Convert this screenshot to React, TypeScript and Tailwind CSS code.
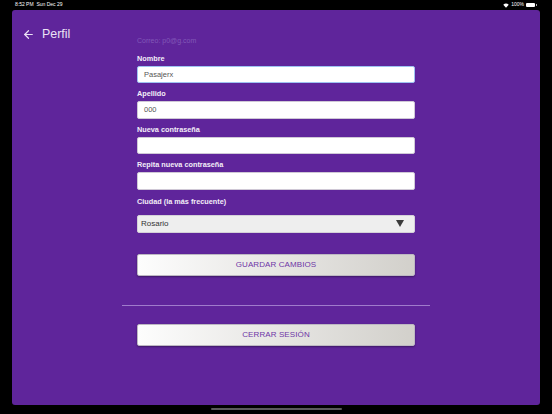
import React from 'react';
import { ArrowLeft } from 'lucide-react';

const font = { fontFamily: '"Liberation Sans", Arial, sans-serif' };

function Field({ label, value, focused, first }: { label: string; value?: string; focused?: boolean; first?: boolean }) {
  return (
    <div className={first ? 'mt-[9px]' : 'mt-[6px]'}>
      <div className="h-[10px] text-[7.3px] leading-[10px] font-bold text-[#f3eef8]">{label}</div>
      <div
        className={`mt-[2px] h-[17.5px] rounded-[2px] bg-white flex items-center px-[6px] text-[7.5px] text-[#555] border ${
          focused ? 'border-[#9ec3f2]' : 'border-[#cfc8d6]'
        }`}
      >
        {value}
      </div>
    </div>
  );
}

function GrayButton({ children, className }: { children: React.ReactNode; className?: string }) {
  return (
    <button
      className={`w-full h-[22px] rounded-[2px] bg-linear-to-r from-[#fdfdfd] to-[#d2d0cb] border border-[#bdb8c2] shadow-[0_1px_2px_rgba(0,0,0,0.35)] text-[8px] text-[#6e35a6] tracking-[0.1px] ${className ?? ''}`}
    >
      {children}
    </button>
  );
}

export default function App() {
  return (
    <div className="w-[552px] h-[414px] bg-black overflow-hidden relative" style={font}>
      {/* status bar */}
      <div className="h-[10px] flex items-center justify-between px-[15px] text-[5px] text-white">
        <span>8:52 PM&nbsp;&nbsp;Sun Dec 29</span>
        <div className="flex items-center gap-[2px]">
          <svg width="6" height="5" viewBox="0 0 12 9">
            <path d="M6 9 L0.5 3.2 A8 8 0 0 1 11.5 3.2 Z" fill="white" />
          </svg>
          <span>100%</span>
          <div className="w-[9px] h-[4px] rounded-[1px] bg-white" />
          <div className="w-[1px] h-[2px] bg-white/70 -ml-[1px]" />
        </div>
      </div>

      {/* panel */}
      <div className="mx-[12px] h-[395px] bg-[#5f259b] rounded-[3px] grid grid-cols-[125px_278px_125px]">
        <div className="pt-[17px] pl-[10px] flex items-start">
          <div className="flex items-center gap-[7px] text-[#ebe2f5]">
            <ArrowLeft size={13} strokeWidth={2.2} />
            <span className="text-[12.4px] leading-[14px]">Perfil</span>
          </div>
        </div>

        <div className="pt-[25.5px] flex flex-col">
          <div className="h-[9px] text-[7px] leading-[9px] text-[#8259b8]">Correo: p0@g.com</div>
          <Field label="Nombre" value="Pasajerx" focused first />
          <Field label="Apellido" value="000" />
          <Field label="Nueva contraseña" />
          <Field label="Repita nueva contraseña" />

          <div className="mt-[7.5px]">
            <div className="h-[10px] text-[7.3px] leading-[10px] font-bold text-[#f3eef8]">Ciudad (la más frecuente)</div>
            <div className="mt-[7.5px] h-[18px] rounded-[2px] bg-[#eeeeee] border border-[#d4d0d8] flex items-center justify-between pl-[3px] pr-[10px] text-[8px] text-[#333]">
              <span>Rosario</span>
              <svg width="8" height="7" viewBox="0 0 8 7">
                <polygon points="0,0 8,0 4,7" fill="#3a3a3a" />
              </svg>
            </div>
          </div>

          <GrayButton className="mt-[21px]">GUARDAR CAMBIOS</GrayButton>

          <div className="mt-[29px] -mx-[15px] h-px bg-[#a07ccc]" />

          <GrayButton className="mt-[18px]">CERRAR SESIÓN</GrayButton>
        </div>
        <div />
      </div>

      {/* home indicator */}
      <div className="flex justify-center mt-[3px]">
        <div className="w-[131px] h-[2px] rounded-full bg-[#5a5a5a]" />
      </div>
    </div>
  );
}
